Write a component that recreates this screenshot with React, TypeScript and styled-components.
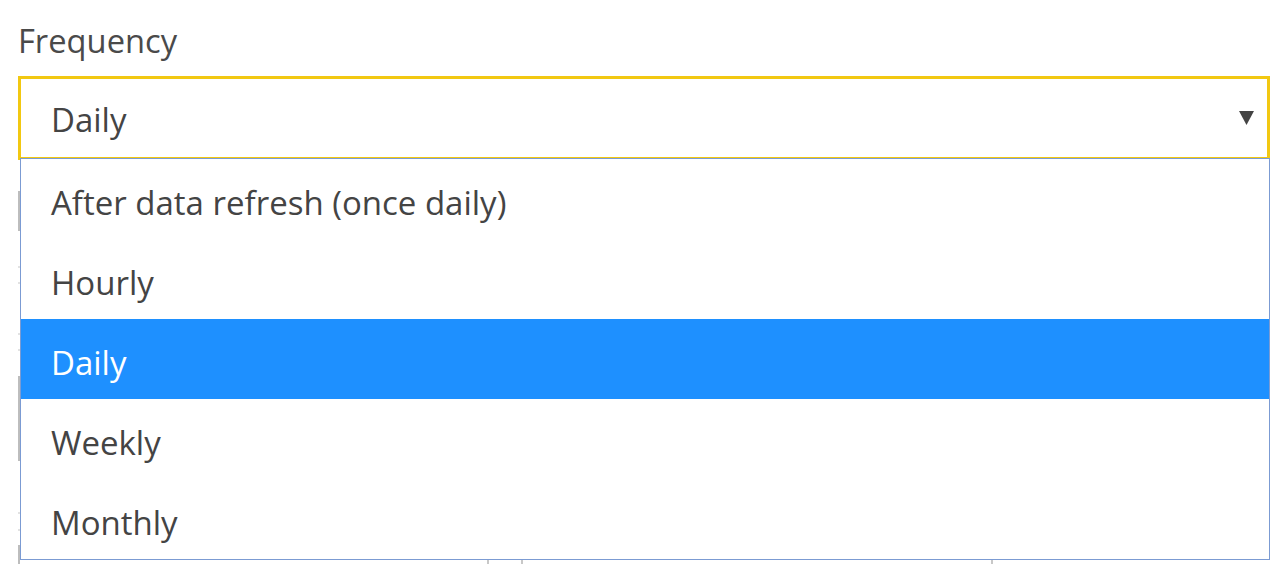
import React from 'react'
import styled, {createGlobalStyle} from 'styled-components'

const GlobalStyle = createGlobalStyle`
  html, body {
    margin: 0;
    padding: 0;
    background: #fff;
    overflow: hidden;
  }
  body {
    font-family: "Open Sans", "Noto Sans", "Liberation Sans", sans-serif;
    color: #444;
  }
`

const Page = styled.main`
  width: 1252px;
  padding: 21px 0 0 18px;
`

const Label = styled.div`
  font-size: 32.7px;
  line-height: 40px;
  color: #4a4a4a;
  margin-bottom: 15px;
`

const SelectWrap = styled.div`
  position: relative;
`

const SelectBox = styled.div`
  box-sizing: border-box;
  height: 84px;
  border: 3px solid #f2c811;
  display: flex;
  align-items: center;
  justify-content: space-between;
  padding: 0 13px 0 30px;
  font-size: 33px;
  color: #444;

  span {
    padding-top: 2px;
  }
`

const Arrow = styled.svg`
  width: 15px;
  height: 14px;
`

const Menu = styled.ul`
  position: absolute;
  top: 82px;
  left: 2px;
  right: 0;
  z-index: 10;
  margin: 0;
  padding: 0;
  list-style: none;
  background: #fff;
  border: 1px solid #7b9bd3;
`

const Option = styled.li<{$active?: boolean}>`
  box-sizing: border-box;
  height: 80px;
  display: flex;
  align-items: center;
  padding: 6px 0 0 30px;
  font-size: 33px;
  color: ${p => (p.$active ? '#fff' : '#444')};
  background: ${p => (p.$active ? '#1e90ff' : '#fff')};
`

// underlying form that peeks out from under the open menu
const Under = styled.div`
  display: flex;
  flex-direction: column;
`

const Edge = styled.div<{$h: number; $gap: number; $light?: boolean}>`
  height: ${p => p.$h}px;
  margin-top: ${p => p.$gap}px;
  border-left: 2px solid ${p => (p.$light ? '#e2e2e2' : '#bdbdbd')};
`

const Table = styled.div`
  margin-top: 14px;
  height: 20px;
  border-left: 2px solid #bdbdbd;
  display: grid;
  grid-template-columns: 469px 34px 470px 1fr;
`

const Col = styled.div`
  border-right: 2px solid #c8c8c8;
  margin-top: 6px;

  &:last-child {
    border-right: none;
  }
`

const options = ['After data refresh (once daily)', 'Hourly', 'Daily', 'Weekly', 'Monthly']

export default function App() {
    const selected = 'Daily'

    return (
        <>
            <GlobalStyle/>
            <Page>
                <Label>Frequency</Label>
                <SelectWrap>
                    <SelectBox>
                        <span>{selected}</span>
                        <Arrow viewBox='0 0 15 14'>
                            <path d='M0 0 H15 L7.5 14 Z' fill='#444'/>
                        </Arrow>
                    </SelectBox>
                    <Menu>
                        {options.map(o => (
                            <Option key={o} $active={o === selected}>{o}</Option>
                        ))}
                    </Menu>
                    <Under>
                        <Edge $h={40} $gap={31}/>
                        <Edge $h={2} $gap={35} $light/>
                        <Edge $h={2} $gap={14} $light/>
                        <Edge $h={2} $gap={49} $light/>
                        <Edge $h={2} $gap={14} $light/>
                        <Edge $h={85} $gap={25}/>
                        <Edge $h={2} $gap={51} $light/>
                        <Edge $h={2} $gap={15} $light/>
                        <Table>
                            <Col/>
                            <Col/>
                            <Col/>
                            <Col/>
                        </Table>
                    </Under>
                </SelectWrap>
            </Page>
        </>
    )
}
